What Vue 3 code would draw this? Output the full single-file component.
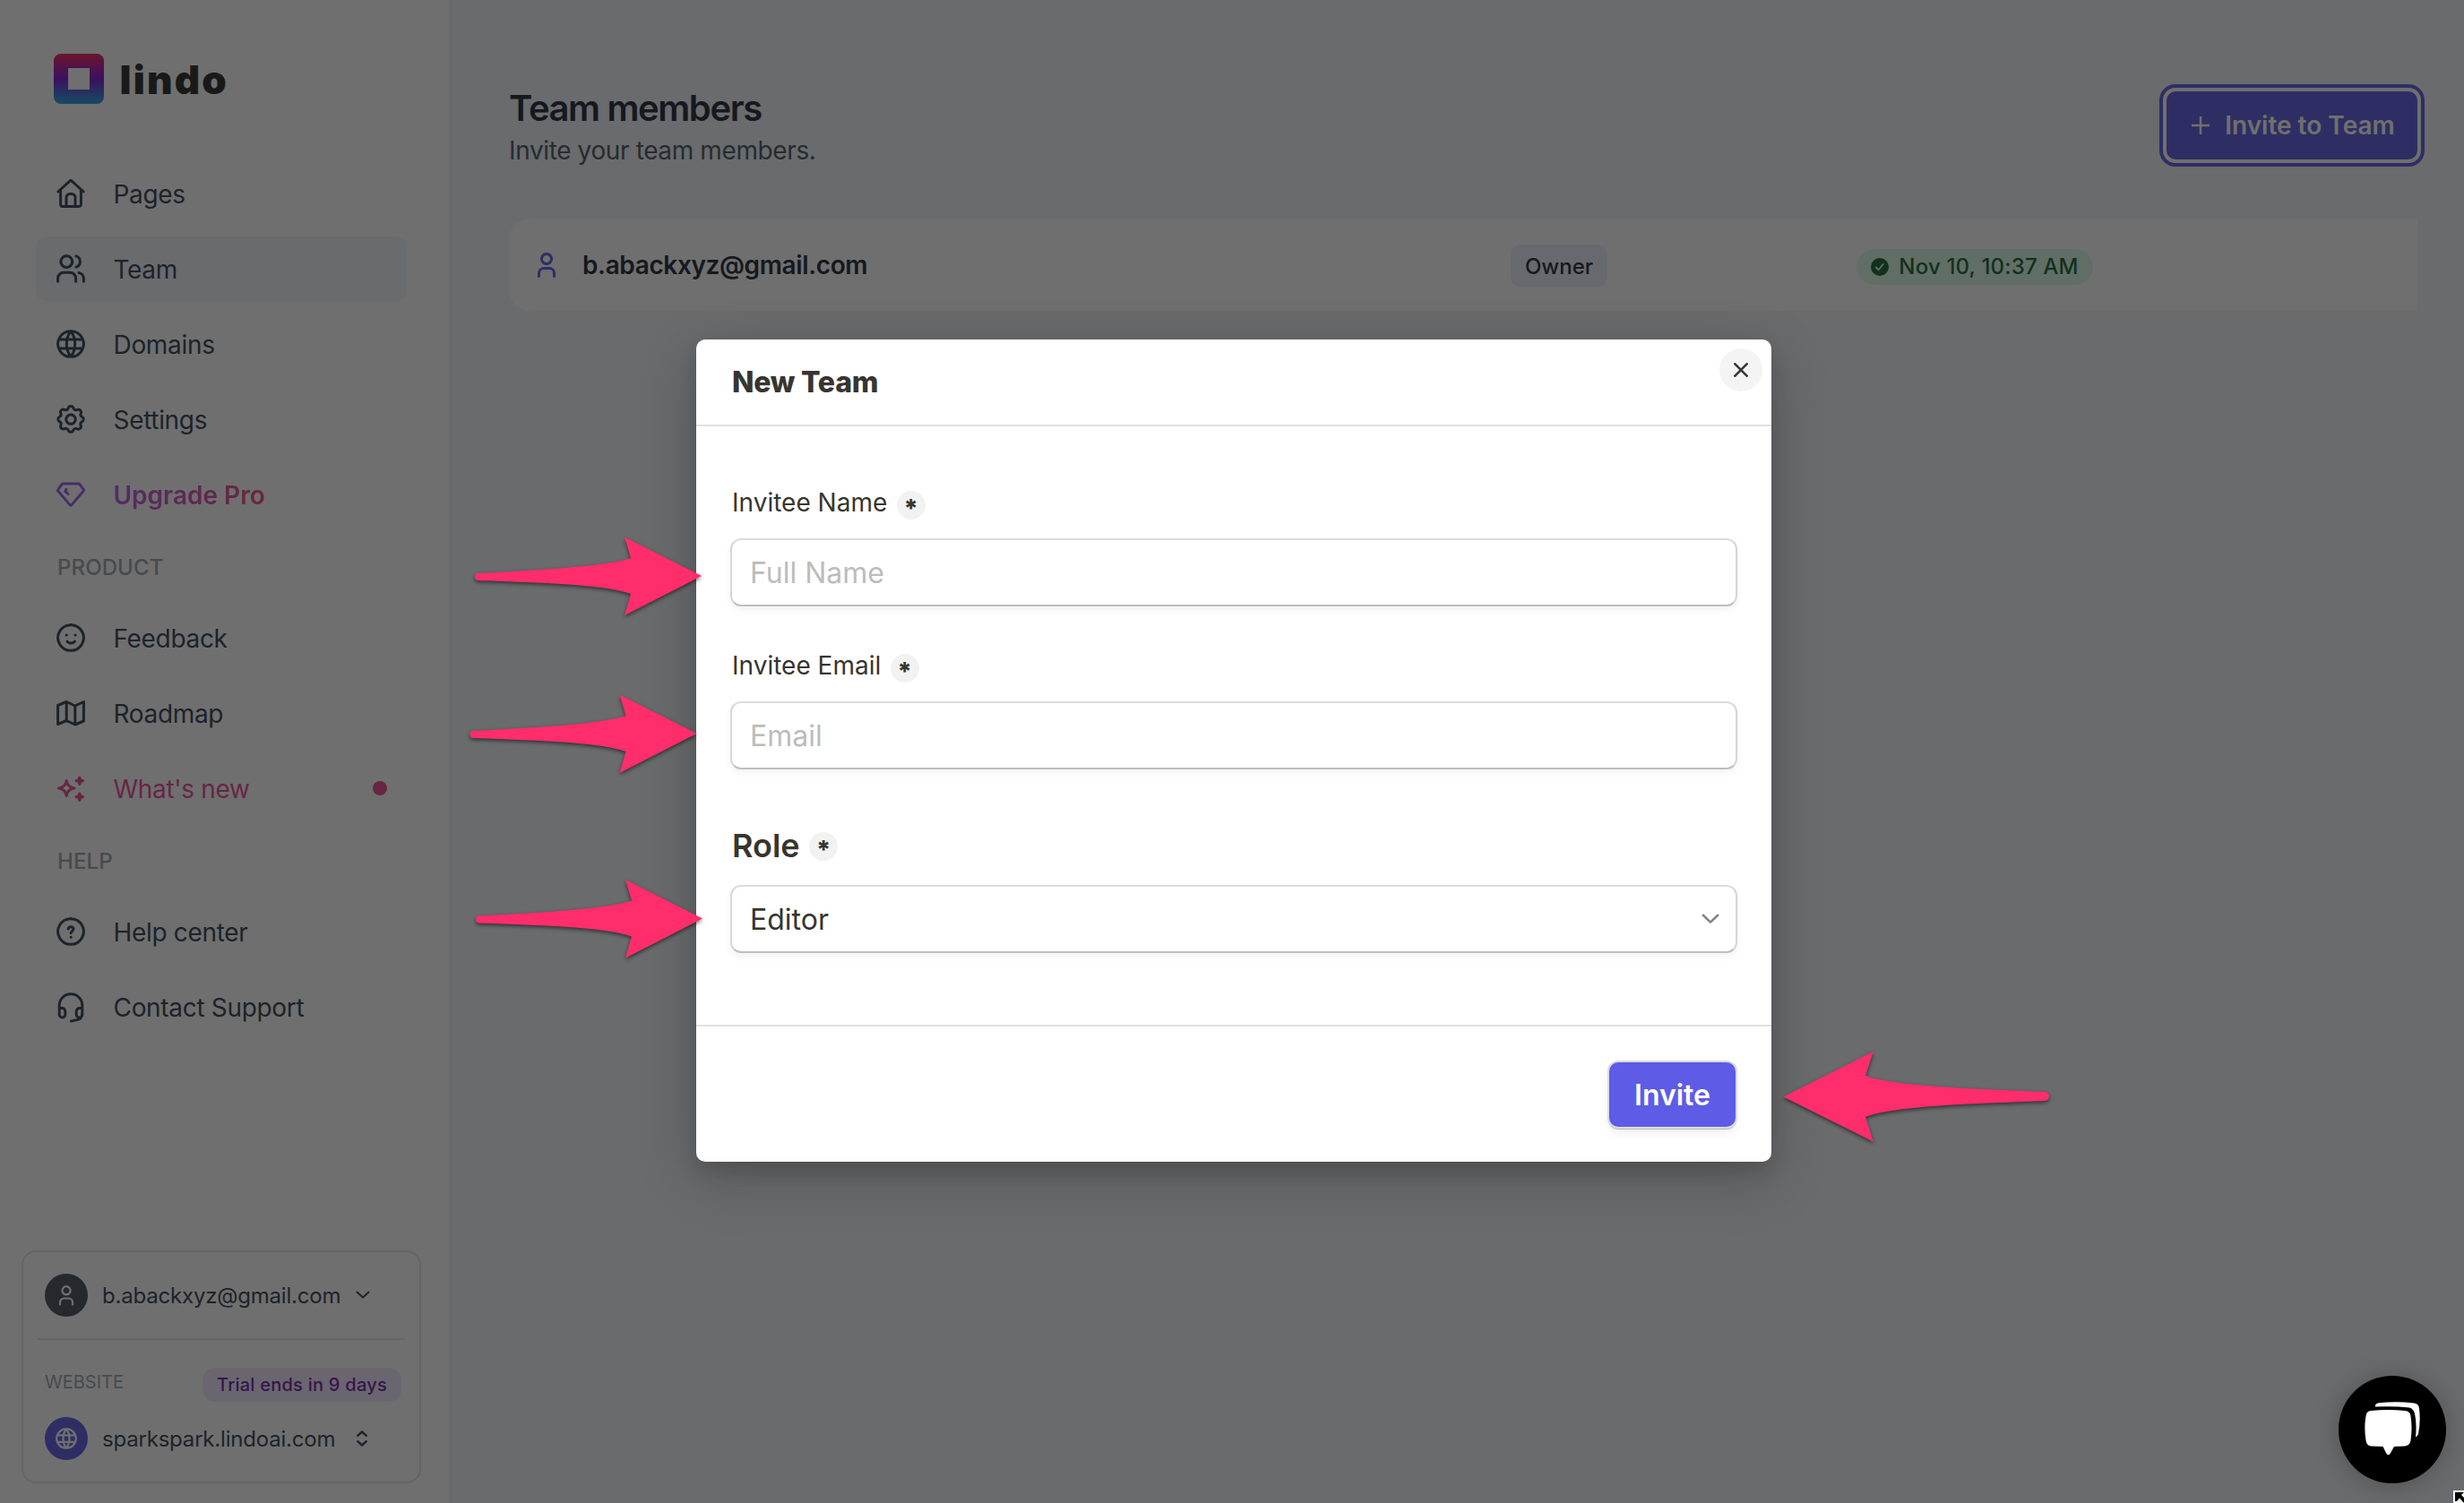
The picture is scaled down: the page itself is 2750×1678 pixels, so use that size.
<script setup>
const mainNav = [
  { label: 'Pages', icon: 'home' },
  { label: 'Team', icon: 'users', active: true },
  { label: 'Domains', icon: 'globe' },
  { label: 'Settings', icon: 'gear' },
  { label: 'Upgrade Pro', icon: 'gem', kind: 'upgrade' },
]
const productNav = [
  { label: 'Feedback', icon: 'smile' },
  { label: 'Roadmap', icon: 'map' },
  { label: "What's new", icon: 'sparkle', kind: 'fresh', dot: true },
]
const helpNav = [
  { label: 'Help center', icon: 'help' },
  { label: 'Contact Support', icon: 'headset' },
]
const groups = [
  { title: '', items: mainNav },
  { title: 'PRODUCT', items: productNav },
  { title: 'HELP', items: helpNav },
]
const icons = {
  home: 'M1.8 14 14.6 2.3a2 2 0 0 1 2.8 0L30.2 14M4.6 12v16.2a2.2 2.2 0 0 0 2.2 2.2h18.4a2.2 2.2 0 0 0 2.2-2.2V12M11 30V20.500a4 4 0 0 1 4-4h2a4 4 0 0 1 4 4V30',
  users: 'M1.600 30.300v-3.600a6.500 6.500 0 0 1 6.500-6.500h7a6.500 6.500 0 0 1 6.500 6.500v3.600M11.300 1.700a6.400 6.400 0 1 0 .01 0M22 1.900a6.500 6.500 0 0 1 0 12.300M25 20.500a6.500 6.500 0 0 1 5.400 6.300v3.500',
  globe: 'M16 1.700a14.300 14.300 0 1 0 .01 0M16 2c-6.300 7.500-6.300 20.500 0 28M16 2c6.300 7.500 6.300 20.500 0 28M3 11h26M3 21h26',
  gear: 'M13.100 3.700a3 3 0 0 1 5.800 0 3 3 0 0 0 4.300 1.800 3 3 0 0 1 4 4 3 3 0 0 0 1.200 3.800 3 3 0 0 1 0 5.500 3 3 0 0 0-1.300 4 3 3 0 0 1-4 4 3 3 0 0 0-4.300 1.600 3 3 0 0 1-5.600 0 3 3 0 0 0-4.300-1.700 3 3 0 0 1-4-4 3 3 0 0 0-1.300-3.900 3 3 0 0 1 0-5.500 3 3 0 0 0 1.200-3.900 3 3 0 0 1 4-4 3 3 0 0 0 4.300-1.700zM16 10.900a5.200 5.200 0 1 0 .01 0',
  gem: 'M7.500 4h17a2 2 0 0 1 1.600.8l4 5.600a1.500 1.500 0 0 1-.2 2L17 27.600a1.400 1.400 0 0 1-2 0L2 12.400a1.500 1.500 0 0 1-.1-2l4-5.600A2 2 0 0 1 7.500 4zM13 15.500l-3.200-2.900 1.200-2.300',
  smile: 'M16 1.700a14.300 14.300 0 1 0 .01 0M11.200 13h.1M21 13h.1M12 20.200c2.200 2.300 6.200 2.300 8.400 0',
  map: 'M1.600 7.500 11.200 3.500l9.600 4.500 9.600-4.500v21.500l-9.600 4-9.600-4.500-9.600 4zM11.200 3.500V25M20.800 8v21',
  sparkle: 'M11.200 7.500c.7 5 3.300 7.700 8.800 8.500-5.500.8-8.100 3.500-8.800 8.500-.7-5-3.500-7.700-8.800-8.500 5.300-.8 8.100-3.500 8.800-8.500zM25.800 4l1 2.700 2.700 1-2.700 1-1 2.700-1-2.700-2.700-1 2.700-1zM25.800 22l1 2.700 2.700 1-2.700 1-1 2.700-1-2.700-2.700-1 2.700-1z',
  help: 'M16 1.700a14.300 14.300 0 1 0 .01 0M13.200 13a3 3 0 0 1 5.800 0c0 2.400-2.800 2.600-2.800 4.800M16.200 22.200h.1',
  headset: 'M3.200 17v-2.400a12.800 12.800 0 0 1 25.600 0V24a7.500 7.500 0 0 1-6 6.600L16.500 32M3.200 17.500h3a3.600 3.600 0 0 1 3.600 3.600v3.600a3.300 3.300 0 0 1-6.600 0zM28.800 17.500h-3a3.600 3.600 0 0 0-3.600 3.600v3.600a3.300 3.300 0 0 0 6.600 0z',
}
const fields = [
  { label: 'Invitee Name', placeholder: 'Full Name' },
  { label: 'Invitee Email', placeholder: 'Email' },
]
const rightArrow = 'M4 41 C60 38 145 34 174 24 L167 .5 L253 44 L167 88 L174 64 C145 53 60 51 4 49 A4 4 0 0 1 4 41Z'
const arrows = [
  { x: 530, y: 599 },
  { x: 524.5, y: 775 },
  { x: 531, y: 981.500 },
]
</script>

<template>
  <div class="page">
    <aside class="sidebar">
      <div class="brand">
        <span class="mark"><i></i></span>
        <span class="word">lindo</span>
      </div>
      <nav v-for="g in groups" :key="g.title" class="group">
        <h3 v-if="g.title">{{ g.title }}</h3>
        <a v-for="n in g.items" :key="n.label" class="item" :class="[n.kind, { active: n.active }]">
          <svg class="icon" width="32" height="32" viewBox="0 0 32 32"><path :d="icons[n.icon]" /></svg>
          <span>{{ n.label }}</span>
          <i v-if="n.dot" class="dot"></i>
        </a>
      </nav>
      <div class="account">
        <div class="acc-row">
          <span class="avatar">
            <svg width="18" height="24" viewBox="0 0 18 24"><path d="M9 2.200a4.600 4.600 0 1 0 .01 0M2 22.500v-2.500a4.500 4.500 0 0 1 4.500-4.500h5a4.500 4.500 0 0 1 4.500 4.500v2.500" /></svg>
          </span>
          <span class="acc-text mail">b.abackxyz@gmail.com</span>
          <svg class="caret" width="16" height="10" viewBox="0 0 16 10"><path d="M1.500 1.500 8 7.500l6.500-6" /></svg>
        </div>
        <hr />
        <div class="site-head">
          <span class="site-label">WEBSITE</span>
          <span class="trial">Trial ends in 9 days</span>
        </div>
        <div class="acc-row site">
          <span class="avatar blue">
            <svg width="24" height="24" viewBox="0 0 32 32"><path :d="icons.globe" /></svg>
          </span>
          <span class="acc-text host">sparkspark.lindoai.com</span>
          <svg class="caret updown" width="12" height="18" viewBox="0 0 12 18"><path d="M1.200 5.800 6 1.500l4.800 4.300M1.200 12.200 6 16.500l4.800-4.300" /></svg>
        </div>
      </div>
    </aside>

    <main class="main">
      <header class="head">
        <div>
          <h1>Team members</h1>
          <p>Invite your team members.</p>
        </div>
        <button class="cta">
          <svg width="20" height="20" viewBox="0 0 20 20"><path d="M10 0v20M0 10h20" /></svg>
          <span>Invite to Team</span>
        </button>
      </header>
      <div class="member">
        <svg class="person" width="20" height="28" viewBox="0 0 20 28"><path d="M10 1.500a5.500 5.500 0 1 0 .01 0M1.500 26.500v-3.500a5.500 5.500 0 0 1 5.500-5.500h6a5.500 5.500 0 0 1 5.500 5.500v3.500" /></svg>
        <span class="email">b.abackxyz@gmail.com</span>
        <span class="role-tag">Owner</span>
        <span class="date-tag">
          <svg width="20" height="20" viewBox="0 0 20 20"><circle cx="10" cy="10" r="10" /><path d="M5.800 10.500l2.800 2.800 5-6.300" /></svg>
          <span>Nov 10, 10:37 AM</span>
        </span>
      </div>
    </main>

    <div class="overlay">
      <section class="modal">
        <header class="m-head">
          <h2>New Team</h2>
          <button class="close"><svg width="16" height="16" viewBox="0 0 16 16"><path d="M.5 .5l15 15M15.500 .5l-15 15" /></svg></button>
        </header>
        <div class="m-body">
          <div v-for="f in fields" :key="f.label" class="field">
            <label><span>{{ f.label }}</span><i class="req">*</i></label>
            <div class="input ph">{{ f.placeholder }}</div>
          </div>
          <div class="field role">
            <label><span>Role</span><i class="req">*</i></label>
            <div class="input select">
              <span>Editor</span>
              <svg width="20" height="12" viewBox="0 0 20 12"><path d="M1.800 1.800 10 9.600l8.200-7.800" /></svg>
            </div>
          </div>
        </div>
        <footer class="m-foot"><button class="submit">Invite</button></footer>
      </section>
    </div>

    <svg class="marks" width="2750" height="1678" viewBox="0 0 2750 1678">
      <path v-for="a in arrows" :key="a.y" :d="rightArrow" :transform="`translate(${a.x} ${a.y})`" />
      <path d="M1990.500 1224.500 2090.700 1174 2082 1201C2115 1213 2210 1216 2282 1219A5 5 0 0 1 2282 1229C2210 1232 2115 1234 2082 1247L2090.700 1274.500Z" />
    </svg>

    <div class="chat">
      <svg width="62" height="60" viewBox="0 0 62 60">
        <path d="M7 10Q26 8 45 10 51 10.500 51.500 16 53.500 29 51.500 43 51 48.500 45 49.500L33 50 28.500 58Q26.500 60.500 24.500 58L20.500 50 7 49.500Q2 48.500 1.500 43-.8 29 1.500 16 2 10.500 7 10Z" />
        <path d="M12 4.500Q12 2 16 1.300 36-.8 55 1.500 60.500 2 61 7.500 62.800 22 60 36 59 39 57 39.500 58.500 24 56 13 54.500 7.500 50 6.500 32 4.500 12 5.500Z" />
      </svg>
    </div>
    <svg class="cursor" width="12" height="14" viewBox="0 0 12 14">
      <path d="M0 0h12v14H0z" /><path d="M2 2h10L9 5l3 3v6L7 8.500 4 12H2z" />
    </svg>
  </div>
</template>

<style>
body { overflow: hidden; }
</style>

<style scoped>
* { box-sizing: border-box; margin: 0; }
.page { position: relative; display: flex; width: 2750px; height: 1678px; overflow: hidden; background: #f1f5f9; font-family: Inter, "Liberation Sans", sans-serif; color: #334155; }
svg path { fill: none; stroke: currentColor; stroke-width: 3; stroke-linecap: round; stroke-linejoin: round; }
button { border: 0; padding: 0; font-family: inherit; display: flex; align-items: center; justify-content: center; }
i { font-style: normal; }

.sidebar { display: flex; flex-direction: column; flex: none; width: 504px; height: 1678px; padding: 60px 32px 22px 24px; background: #fff; border-right: 2px solid #e8ebef; }
.brand { display: flex; align-items: center; height: 56px; margin: 0 0 64px 36px; }
.mark { display: flex; align-items: center; justify-content: center; width: 56px; height: 56px; border-radius: 8px; background: linear-gradient(#f0205f 2%, #7b12d8 50%, #1fa3e0 98%); }
.mark i { width: 24px; height: 24px; background: #fff; }
.word { margin-left: 17.5px; font-weight: 900; font-size: 44px; line-height: 56px; padding-top: 1px; color: #2a2a2a; letter-spacing: 2.200px; }
.group h3 { height: 76px; padding: 10px 0 0 40px; font-size: 24px; line-height: 48px; font-weight: 500; color: #9ca3af; letter-spacing: .1px; }
.item { display: flex; align-items: center; height: 72px; width: 414px; margin: 0 0 12px 16px; padding: 0 22px 0 23px; border-radius: 12px; font-size: 28px; letter-spacing: -.32px; }
.item span { margin-left: 31.5px; padding-top: 1px; }
.item.active { background: #f1f5f9; }
.icon { overflow: visible; }
.item.upgrade .icon { color: #9b5af5; }
.item.upgrade span { font-weight: 600; letter-spacing: 0; color: transparent; background: linear-gradient(90deg, #b557ea, #f04b80); background-clip: text; }
.item.fresh { color: #ec4899; }
.dot { width: 16px; height: 16px; border-radius: 50%; background: #ec4899; margin-left: auto; }

.account { margin-top: auto; width: 446px; height: 260px; border: 2px solid #e5e7eb; border-radius: 16px; padding: 24px 16px 0; }
.acc-row { display: flex; align-items: center; height: 48px; padding-left: 8px; font-size: 24px; letter-spacing: -.2px; }
.avatar { display: flex; align-items: center; justify-content: center; width: 48px; height: 48px; border-radius: 50%; background: #47505c; color: #fff; margin-right: 16px; }
.avatar path { stroke-width: 2.200; }
.avatar.blue { background: #5e5ce6; }
.avatar.blue path { stroke-width: 3; }
.acc-text { padding-top: 1px; }
.caret { margin-left: 17px; }
.caret path { stroke-width: 2; }
.updown { margin-left: 24px; }
.updown path { stroke-width: 2.400; }
hr { border: 0; height: 2px; background: #e5e7eb; margin-top: 24px; }
.site-head { display: flex; justify-content: space-between; align-items: center; height: 38px; margin-top: 31px; padding: 0 4px 0 8px; }
.site-label { font-size: 20px; color: #9ca3af; margin-top: -6px; }
.trial { height: 38px; width: 222px; text-align: center; border-radius: 14px; background: #f3e8ff; color: #6b21a8; font-size: 20px; line-height: 38px; font-weight: 500; letter-spacing: .25px; white-space: nowrap; }
.site { margin-top: 17px; }

.main { flex: 1; padding: 94px 52px 0 64px; }
.head { display: flex; justify-content: space-between; height: 150px; }
h1 { margin-top: 3px; font-size: 40px; line-height: 48px; font-weight: 600; color: #1f2937; letter-spacing: -1.400px; }
.head p { font-size: 28px; line-height: 44px; color: #4b5563; margin-top: 1px; letter-spacing: -.38px; }
.cta { width: 280px; height: 76px; margin-top: 8px; padding-left: 3px; border-radius: 10px; background: #5e5ce6; color: #fff; box-shadow: 0 0 0 4px #fff, 0 0 0 8px #5e5ce6; font-size: 28px; font-weight: 600; gap: 17px; }
.cta path { stroke-width: 2.500; }
.member { display: flex; align-items: center; height: 103px; background: #fff; border-radius: 24px 0 0 24px; padding-left: 32px; }
.person { color: #5e5ce6; }
.email { width: 1035px; margin-left: 30px; font-size: 28px; font-weight: 600; color: #1f2937; letter-spacing: -.38px; }
.role-tag { width: 108px; height: 48px; margin: 2px 0 0 1px; border-radius: 12px; background: #eef0ff; text-align: center; font-size: 24px; line-height: 49px; font-weight: 500; color: #1f2937; }
.date-tag { display: flex; align-items: center; justify-content: center; gap: 11px; margin-left: 278px; margin-top: 4px; width: 264px; height: 40px; border-radius: 20px; background: #dcfce7; color: #166534; font-size: 24px; font-weight: 500; letter-spacing: .18px; white-space: nowrap; }
.date-tag circle { fill: currentColor; }
.date-tag path { stroke: #dcfce7; stroke-width: 1.800; }

.overlay { position: absolute; inset: 0; background: rgba(15, 15, 15, .6); padding: 379px 0 0 777px; }
.modal { width: 1200px; height: 918px; border-radius: 10px; background: #fff; color: #37352f; box-shadow: 0 10px 20px rgba(15, 15, 15, .14), 0 18px 64px rgba(15, 15, 15, .22); }
.m-head { display: flex; justify-content: space-between; height: 97px; border-bottom: 2px solid #e0e0e0; padding: 10px 10px 0 40px; }
h2 { font-size: 32px; line-height: 76px; font-weight: 800; letter-spacing: -.25px; }
.close { width: 48px; height: 48px; border-radius: 50%; background: #f4f4f4; color: #37352f; }
.close path { stroke-width: 2.600; stroke-linecap: butt; }
.m-body { height: 670px; padding: 65px 38px 0 38px; border-bottom: 2px solid #e0e0e0; }
.field { height: 182px; }
label { display: flex; align-items: center; height: 40px; font-size: 28px; padding-left: 2px; margin-bottom: 20px; }
.req { display: flex; justify-content: center; width: 32px; height: 32px; border-radius: 50%; background: #f2f2f2; margin: 5px 0 0 10.500px; font-size: 28px; font-weight: 800; line-height: 41px; }
.input { display: flex; align-items: center; height: 76px; border: 2px solid #d6d6d6; border-bottom-color: #bfbfbf; border-top-color: #dcdcdc; border-radius: 12px; padding: 0 20px; font-size: 32px; box-shadow: 0 4px 8px rgba(15, 15, 15, .05); }
.ph { color: #bdbcba; }
.role { margin-top: 20px; }
.role label { font-size: 36px; font-weight: 600; height: 38px; margin-bottom: 25px; }
.role .req { margin-top: 1px; }
.select { justify-content: space-between; padding-right: 18px; }
.select svg { color: #868583; }
.select path { stroke-width: 2.600; }
.m-foot { display: flex; justify-content: flex-end; padding: 40px 40px 0; }
.submit { width: 141px; height: 72px; border-radius: 10px; background: #5e5ce6; color: #fff; font-size: 32px; font-weight: 600; box-shadow: 0 0 0 2px #dcdcdc, 0 2px 1px 1px #bbb, 0 6px 12px rgba(15, 15, 15, .08); }

.marks { position: absolute; inset: 0; }
.marks path { fill: #ff2d6b; stroke: none; filter: drop-shadow(0 2px 2px rgba(0, 0, 0, .55)); }
.chat { position: absolute; left: 2610px; top: 1536px; width: 120px; height: 120px; border-radius: 50%; background: #000; box-shadow: 0 2px 28px rgba(0, 0, 0, .25); padding: 29px; }
.chat path { fill: #fff; stroke: none; }
.cursor { position: absolute; right: 0; bottom: 0; }
.cursor path { stroke: none; fill: #000; }
.cursor path:first-child { fill: #fff; }
</style>
